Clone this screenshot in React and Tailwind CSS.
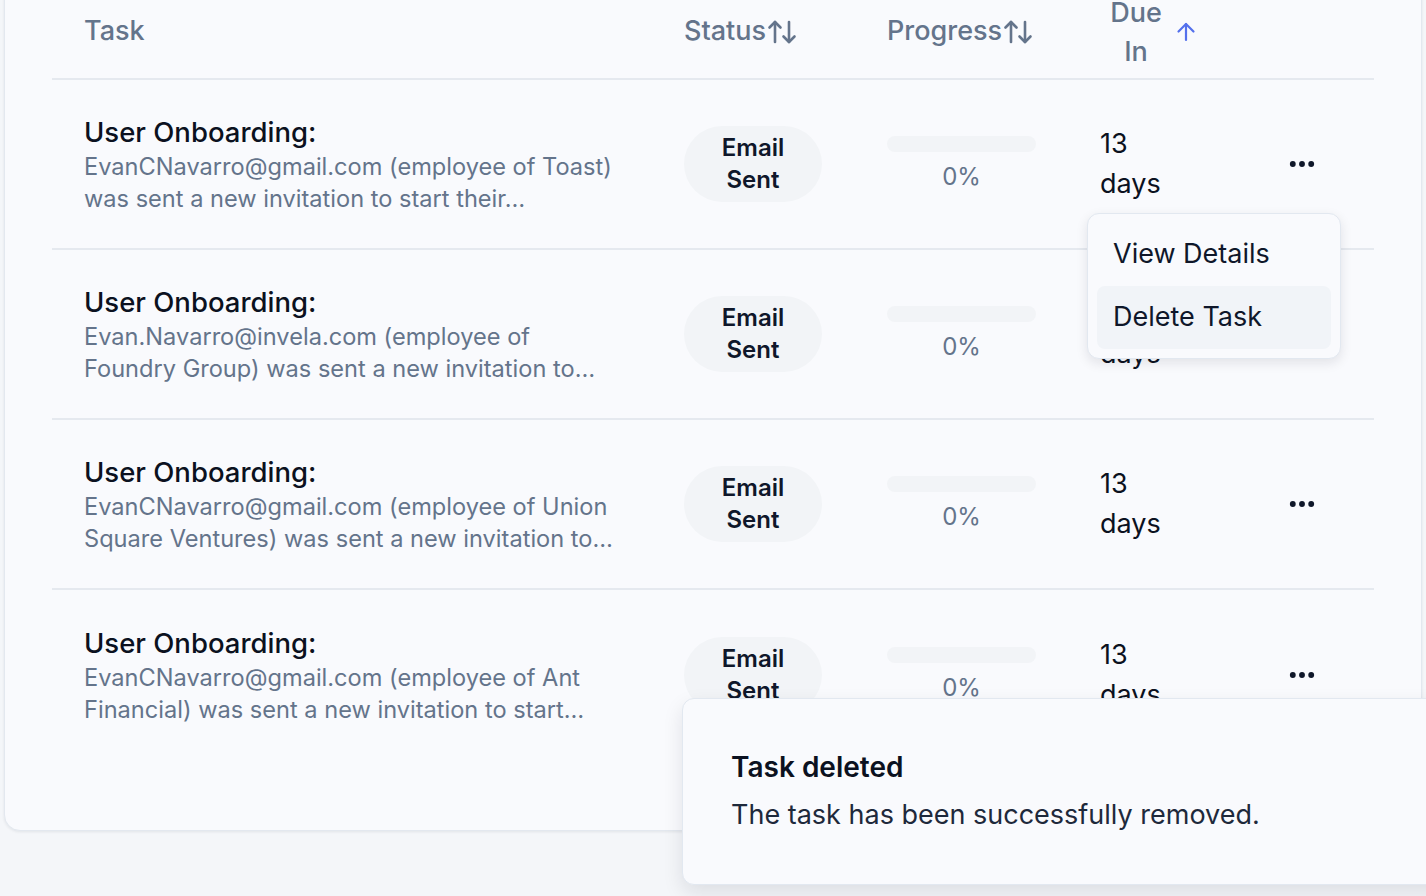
import React from "react";

const rows = [
  ["EvanCNavarro@gmail.com (employee of Toast)", "was sent a new invitation to start their…"],
  ["Evan.Navarro@invela.com (employee of", "Foundry Group) was sent a new invitation to…"],
  ["EvanCNavarro@gmail.com (employee of Union", "Square Ventures) was sent a new invitation to…"],
  ["EvanCNavarro@gmail.com (employee of Ant", "Financial) was sent a new invitation to start…"],
];

function SortIcon() {
  return (
    <svg width="30" height="26" viewBox="0 0 30 26" fill="none" stroke="currentColor" strokeWidth="2.6" strokeLinecap="round" strokeLinejoin="round" className="ml-[1px]">
      <path d="M8 3v20" />
      <path d="M2.5 8.5 8 3l5.5 5.5" />
      <path d="M22 3v20" />
      <path d="M16.5 17.5 22 23l5.5-5.5" />
    </svg>
  );
}

function ArrowUp() {
  return (
    <svg width="22" height="20" viewBox="0 0 22 20" fill="none" stroke="currentColor" strokeWidth="2.2" strokeLinecap="round" strokeLinejoin="round">
      <path d="M11 2v16" />
      <path d="M3.5 9.5 11 2l7.5 7.5" />
    </svg>
  );
}

function Dots() {
  return (
    <svg width="26" height="26" viewBox="0 0 24 24" fill="currentColor">
      <circle cx="3.5" cy="12" r="2.7" />
      <circle cx="12" cy="12" r="2.7" />
      <circle cx="20.5" cy="12" r="2.7" />
    </svg>
  );
}

const grid = "grid grid-cols-[600px_203px_213px_182px_124px]";

export default function App() {
  return (
    <div className="relative h-[896px] w-full overflow-hidden bg-[#f4f6f9] font-['Inter',sans-serif]">
      <div className="mx-[4px] mt-[-63px] rounded-[16px] border border-[#e3e8ef] bg-[#f9fafd] px-[47px] pt-[47px] pb-[70px] shadow-[0_1px_3px_rgba(15,23,42,0.08)]">
        <div className={`${grid} h-[95px] items-center border-b-2 border-[#e5e9ef] text-[27px] font-medium text-[#64748b]`}>
          <div className="px-[32px]">Task</div>
          <div className="flex items-center px-[32px]">
            <span>Status</span>
            <SortIcon />
          </div>
          <div className="flex items-center px-[32px]">
            <span>Progress</span>
            <SortIcon />
          </div>
          <div className="flex items-center gap-[3px] px-[32px]">
            <span className="w-[72px] text-center leading-[39px]">Due In</span>
            <span className="text-[#5470ec]">
              <ArrowUp />
            </span>
          </div>
          <div />
        </div>

        {rows.map((r, i) => (
          <div
            key={i}
            className={`${grid} h-[170px] items-center ${i < rows.length - 1 ? "border-b-2 border-[#e5e9ef]" : ""}`}
          >
            <div className="px-[32px]">
              <div className="text-[27.5px] font-medium leading-[37px] text-[#0b1120]">User Onboarding:</div>
              <div className="text-[23.6px] leading-[32px] text-[#64748b]">
                <div className="whitespace-nowrap">{r[0]}</div>
                <div className="whitespace-nowrap">{r[1]}</div>
              </div>
            </div>
            <div className="px-[32px]">
              <div className="flex h-[76px] w-[138px] items-center justify-center rounded-full bg-[#f2f4f7] text-center text-[24px] font-semibold leading-[32px] text-[#0f172a]">
                Email
                <br />
                Sent
              </div>
            </div>
            <div className="px-[32px]">
              <div className="w-[149px]">
                <div className="h-[16px] w-full rounded-full bg-[#f2f4f7]" />
                <div className="mt-[9px] text-center text-[24px] leading-[32px] text-[#64748b]">0%</div>
              </div>
            </div>
            <div className="px-[32px] text-[27px] leading-[40px] text-[#0b1120]">
              13
              <br />
              days
            </div>
            <div className="flex px-[32px]">
              <div className="flex h-[40px] w-[40px] items-center justify-center text-[#0f172a]">
                <Dots />
              </div>
            </div>
          </div>
        ))}
      </div>

      <div className="absolute left-[1087px] top-[213px] w-[254px] rounded-[12px] border border-[#e2e8f0] bg-[#f9fafd] p-[9px] shadow-[0_4px_12px_rgba(15,23,42,0.10)]">
        <div className="flex h-[63px] items-center rounded-[8px] px-[16px] text-[27px] text-[#0f172a]">View Details</div>
        <div className="flex h-[63px] items-center rounded-[8px] bg-[#f1f4f8] px-[16px] text-[27px] text-[#0f172a]">Delete Task</div>
      </div>

      <div className="absolute left-[682px] top-[698px] h-[187px] w-[800px] rounded-[12px] border border-[#e2e8f0] bg-[#f9fafd] px-[48px] pt-[49px] shadow-[0_8px_20px_rgba(15,23,42,0.10)]">
        <div className="text-[28px] font-semibold leading-[38px] text-[#0b1120]">Task deleted</div>
        <div className="mt-[10px] text-[27px] leading-[38px] text-[#1e293b]">The task has been successfully removed.</div>
      </div>
    </div>
  );
}
